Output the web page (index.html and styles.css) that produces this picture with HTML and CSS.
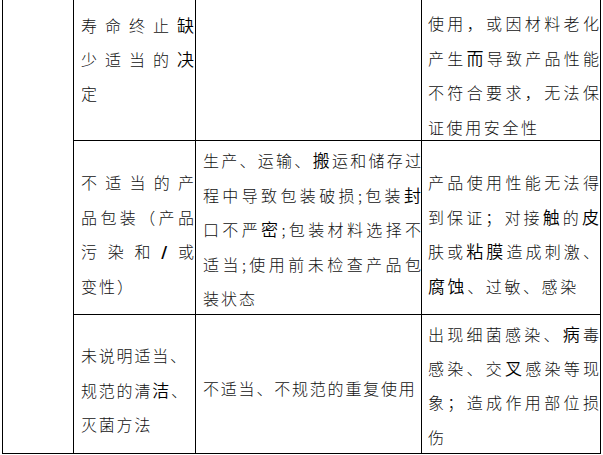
FILE: index.html
```html
<!DOCTYPE html>
<html lang="zh-CN">
<head>
<meta charset="utf-8">
<title>表格</title>
<link rel="stylesheet" href="styles.css">
</head>
<body>
<div class="sheet">
  <div class="cell c1 span3"></div>

  <div class="cell c2 r1c2">
    <div class="ln full">寿命终止<b>缺</b></div>
    <div class="ln full">少适当的<b>决</b></div>
    <div class="ln">定</div>
  </div>
  <div class="cell c3"></div>
  <div class="cell c4 r1c4">
    <div class="ln full">使用，或因材料老化</div>
    <div class="ln full">产生<b>而</b>导致产品性能</div>
    <div class="ln full">不符合要求，无法保</div>
    <div class="ln">证使用安全性</div>
  </div>

  <div class="cell c2 r2c2">
    <div class="ln full">不适当的产</div>
    <div class="ln full">品包装（产品</div>
    <div class="ln full">污染和<b class="slash">/</b>或</div>
    <div class="ln">变性）</div>
  </div>
  <div class="cell c3 r2c3">
    <div class="ln full">生产、运输、<b>搬</b>运和储存过</div>
    <div class="ln full">程中导致包装破损;包装<b>封</b></div>
    <div class="ln full">口不严<b>密</b>;包装材料选择不</div>
    <div class="ln full">适当;使用前未检查产品包</div>
    <div class="ln">装状态</div>
  </div>
  <div class="cell c4 r2c4">
    <div class="ln full">产品使用性能无法得</div>
    <div class="ln full">到保证；对接<b>触</b>的<b>皮</b></div>
    <div class="ln full">肤或<b>粘膜</b>造成刺激、</div>
    <div class="ln"><b>腐蚀</b>、过敏、感染</div>
  </div>

  <div class="cell c2 r3c2">
    <div class="ln">未说明适当、</div>
    <div class="ln">规范的清<b>洁</b>、</div>
    <div class="ln">灭菌方法</div>
  </div>
  <div class="cell c3 r3c3">
    <div class="ln">不适当、不规范的重复使用</div>
  </div>
  <div class="cell c4 r3c4">
    <div class="ln full">出现细菌感染、<b>病</b>毒</div>
    <div class="ln full">感染、交<b>叉</b>感染等现</div>
    <div class="ln full">象；造成作用部位损</div>
    <div class="ln">伤</div>
  </div>
</div>
</body>
</html>
```

FILE: styles.css
```css
html, body {
  margin: 0;
  padding: 0;
  background: #ffffff;
}

body {
  font-family: "Noto Sans CJK SC", "Noto Sans", sans-serif;
  font-size: 16px;
  font-weight: 300;
  color: #111111;
  overflow: hidden;
}

.sheet {
  margin-left: 2px;
  display: grid;
  grid-template-columns: 71px 122px 226px 179px;
  grid-template-rows: 141px 174px 139px;
  border-left: 1px solid #000000;
  width: 598px;
}

.cell {
  border-right: 1px solid #000000;
  border-bottom: 1px solid #000000;
  box-sizing: border-box;
  overflow: visible;
  line-height: 34.5px;
  letter-spacing: 2px;
}

.span3 {
  grid-row: 1 / 4;
  grid-column: 1;
}

.c2 {
  grid-column: 2;
  padding: 0 1px 0 7px;
}

.c3 {
  grid-column: 3;
  padding: 0 0 0 7px;
}

.c4 {
  grid-column: 4;
  padding: 0 1px 0 6px;
  letter-spacing: 2.6px;
}

.ln {
  white-space: nowrap;
}

.ln.full {
  text-align: justify;
  text-align-last: justify;
  letter-spacing: 0;
}

.ln b {
  font-weight: 350;
  font-size: 17px;
  line-height: 1;
  color: #000000;
}

.ln b.slash {
  font-family: "DejaVu Sans", sans-serif;
  font-weight: 700;
  font-size: 16px;
}

.r1c2 {
  padding-top: 8px;
  line-height: 34px;
}

.r1c4 {
  padding-top: 6px;
}

.r2c2 {
  padding-top: 24px;
}

.r2c3 {
  padding-top: 2px;
}

.r2c4 {
  padding-top: 24px;
}

.r3c2 {
  padding-top: 23px;
  letter-spacing: 1.8px;
}

.r3c3 {
  padding-top: 56px;
  letter-spacing: 1.8px;
}

.r3c4 {
  padding-top: 2px;
  line-height: 34.2px;
}
```
